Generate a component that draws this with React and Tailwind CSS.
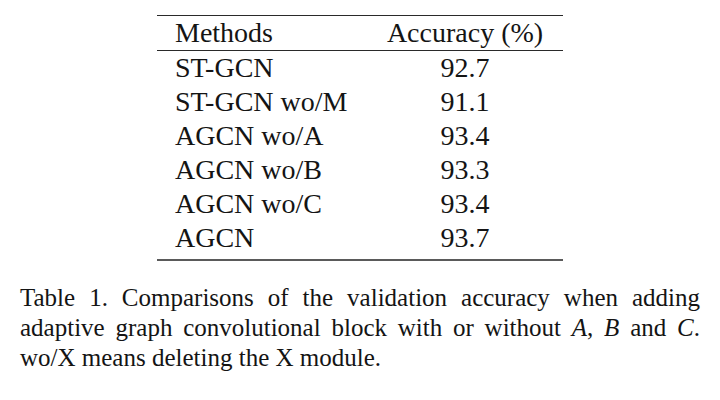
import React from 'react';

const rows = [
    ['ST-GCN', '92.7'],
    ['ST-GCN wo/M', '91.1'],
    ['AGCN wo/A', '93.4'],
    ['AGCN wo/B', '93.3'],
    ['AGCN wo/C', '93.4'],
    ['AGCN', '93.7'],
];

const serif = '"Liberation Serif", "Times New Roman", "DejaVu Serif", monospace';

const App = () => {
    return (
        <div className="w-[720px] h-[400px] bg-white text-[#141414] overflow-hidden" style={{ fontFamily: serif }}>
            <div className="pt-[15px]">
                <div className="mx-auto w-[406px] border-t border-[#2a2a2a] border-b-2 border-b-[#5a5a5a] pb-[4px]">
                    <div className="grid grid-cols-[210px_196px] text-[28px] leading-[34px] border-b border-[#2a2a2a]">
                        <div className="pl-[18px]">Methods</div>
                        <div className="text-center">Accuracy (%)</div>
                    </div>
                    {rows.map(([name, acc]) => (
                        <div key={name} className="grid grid-cols-[210px_196px] text-[28px] leading-[34px]">
                            <div className="pl-[18px]">{name}</div>
                            <div className="text-center">{acc}</div>
                        </div>
                    ))}
                </div>
            </div>
            <p className="mt-[22px] mx-[20px] text-[25px] leading-[30px] text-justify">
                Table 1. Comparisons of the validation accuracy when adding adaptive graph convolutional block with or without <i>A</i>, <i>B</i> and <i>C</i>. wo/X means deleting the X module.
            </p>
        </div>
    );
};

export default App;
